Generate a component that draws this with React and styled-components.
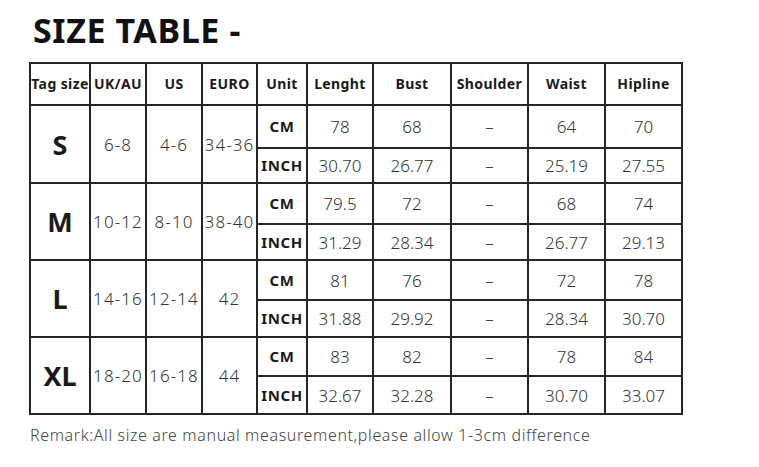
import React from "react";
import styled, { createGlobalStyle } from "styled-components";

const Global = createGlobalStyle`
  html, body { margin: 0; padding: 0; background: #fff; }
  body { font-family: "Noto Sans", "Open Sans", sans-serif; }
`;

const Page = styled.div`
  width: 759px;
  height: 467px;
  background: #fff;
  padding: 0 0 0 29px;
  box-sizing: border-box;
`;

const Title = styled.h1`
  margin: 0;
  padding: 5px 0 0 4px;
  height: 62px;
  box-sizing: border-box;
  font-family: "Noto Sans", sans-serif;
  font-weight: 700;
  font-size: 34px;
  line-height: 50px;
  color: #111;
  letter-spacing: 0.6px;
`;

const Table = styled.table`
  border-collapse: collapse;
  table-layout: fixed;
  width: 653px;
  border: 2px solid #262626;
`;

const Cell = styled.td`
  border: 2px solid #262626;
  padding: 0;
  text-align: center;
  vertical-align: middle;
  color: #333;
  font-family: "Noto Sans", sans-serif;
  font-weight: 300;
  font-size: 17px;
  line-height: 1;
  white-space: nowrap;
  overflow: hidden;
  letter-spacing: ${(p) => (p.$wide ? "1.1px" : "0")};
`;

const HeadCell = styled(Cell)`
  font-weight: 700;
  font-size: 14px;
  color: #1a1a1a;
  letter-spacing: 0.4px;
`;

const SizeCell = styled(Cell)`
  font-weight: 700;
  font-size: 27px;
  color: #1a1a1a;
`;

const UnitCell = styled(Cell)`
  font-weight: 700;
  font-size: 15px;
  color: #1a1a1a;
  letter-spacing: 0.6px;
`;

const Row = styled.tr`
  height: ${(p) => p.$h}px;
`;

const Remark = styled.p`
  margin: 10px 0 0 1px;
  font-family: "Noto Sans", sans-serif;
  font-weight: 300;
  font-size: 16px;
  color: #444;
  line-height: 20px;
  letter-spacing: 0.62px;
`;

const cols = [60, 56, 56, 55, 50, 66, 78, 77, 77, 77];
const heads = ["Tag size", "UK/AU", "US", "EURO", "Unit", "Lenght", "Bust", "Shoulder", "Waist", "Hipline"];

const sizes = [
  { s: "S", uk: "6-8", us: "4-6", eu: "34-36", h: [43, 35],
    cm: ["78", "68", "–", "64", "70"], inch: ["30.70", "26.77", "–", "25.19", "27.55"] },
  { s: "M", uk: "10-12", us: "8-10", eu: "38-40", h: [41, 36],
    cm: ["79.5", "72", "–", "68", "74"], inch: ["31.29", "28.34", "–", "26.77", "29.13"] },
  { s: "L", uk: "14-16", us: "12-14", eu: "42", h: [40, 37],
    cm: ["81", "76", "–", "72", "78"], inch: ["31.88", "29.92", "–", "28.34", "30.70"] },
  { s: "XL", uk: "18-20", us: "16-18", eu: "44", h: [39, 38],
    cm: ["83", "82", "–", "78", "84"], inch: ["32.67", "32.28", "–", "30.70", "33.07"] },
];

export default function App() {
  return (
    <>
      <Global />
      <Page>
        <Title>SIZE TABLE -</Title>
        <Table>
          <colgroup>
            {cols.map((w, i) => (
              <col key={i} style={{ width: w }} />
            ))}
          </colgroup>
          <tbody>
            <Row $h={42}>
              {heads.map((h) => (
                <HeadCell key={h}>{h}</HeadCell>
              ))}
            </Row>
            {sizes.map((r) => (
              <React.Fragment key={r.s}>
                <Row $h={r.h[0]}>
                  <SizeCell rowSpan={2}>{r.s}</SizeCell>
                  <Cell rowSpan={2} $wide>{r.uk}</Cell>
                  <Cell rowSpan={2} $wide>{r.us}</Cell>
                  <Cell rowSpan={2} $wide>{r.eu}</Cell>
                  <UnitCell>CM</UnitCell>
                  {r.cm.map((v, i) => (
                    <Cell key={i}>{v}</Cell>
                  ))}
                </Row>
                <Row $h={r.h[1]}>
                  <UnitCell>INCH</UnitCell>
                  {r.inch.map((v, i) => (
                    <Cell key={i}>{v}</Cell>
                  ))}
                </Row>
              </React.Fragment>
            ))}
          </tbody>
        </Table>
        <Remark>Remark:All size are manual measurement,please allow 1-3cm difference</Remark>
      </Page>
    </>
  );
}
